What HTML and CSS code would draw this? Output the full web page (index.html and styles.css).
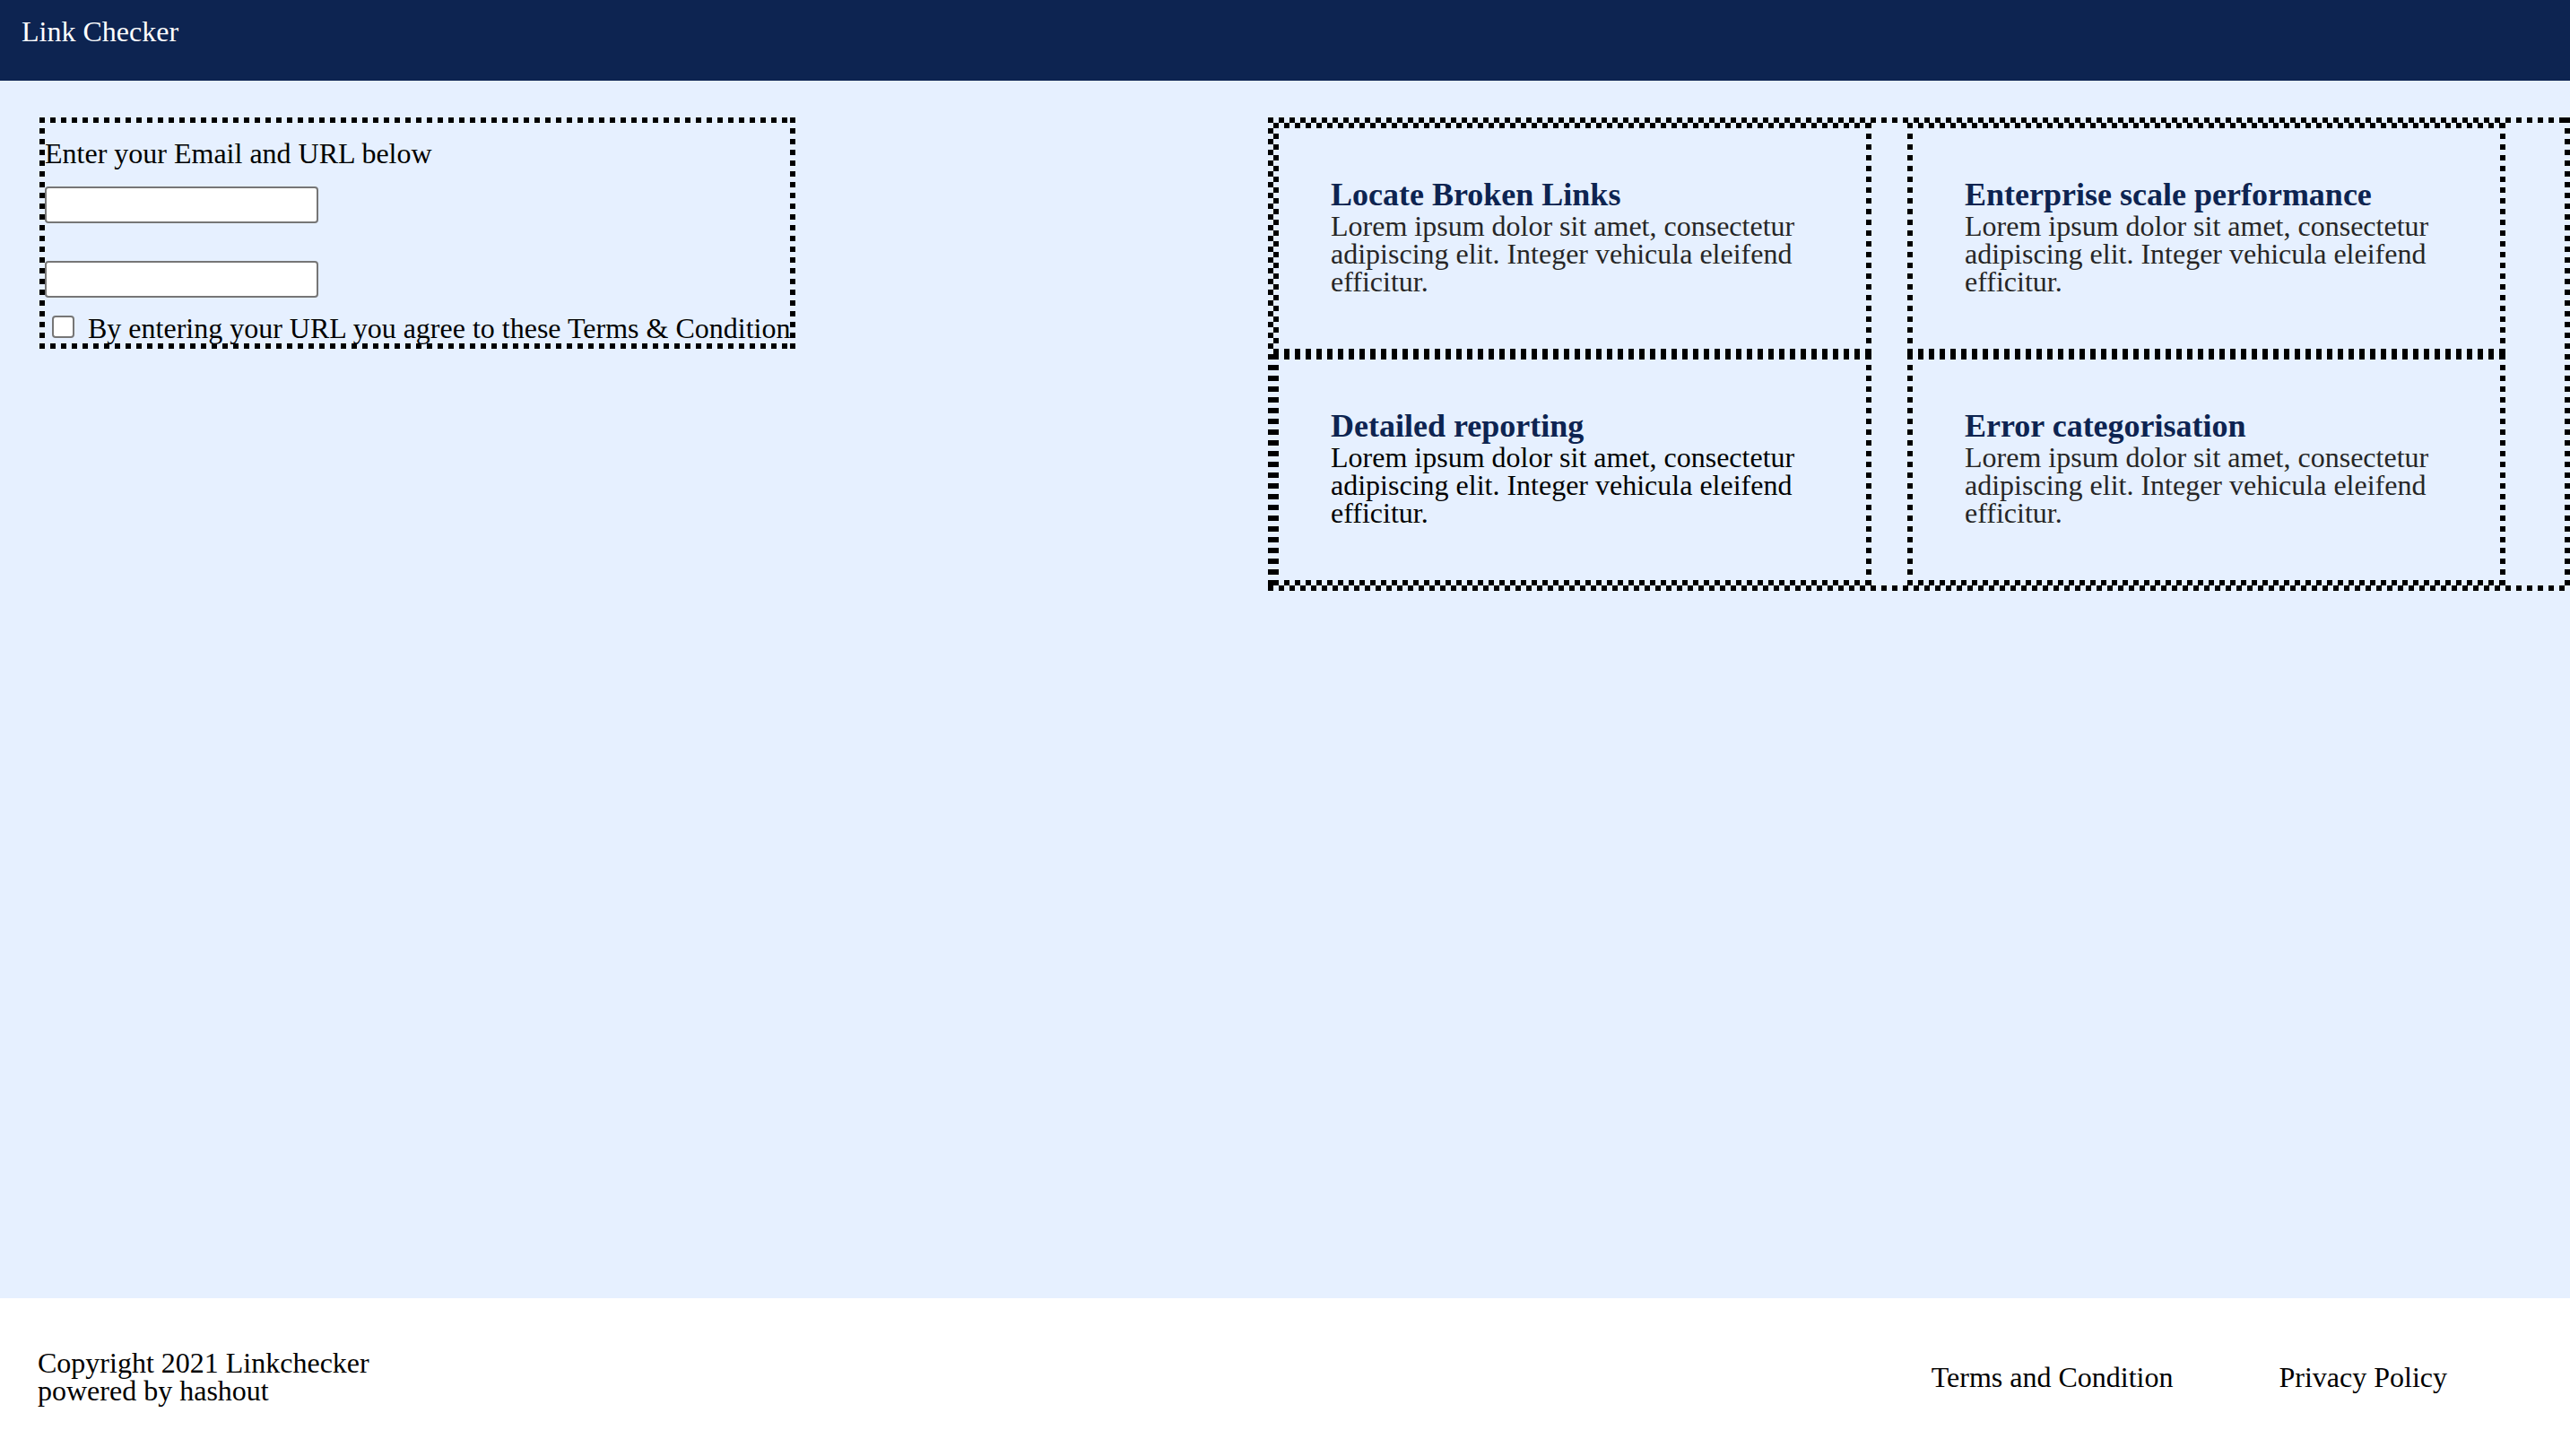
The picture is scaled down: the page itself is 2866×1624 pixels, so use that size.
FILE: index.html
```html
<!DOCTYPE html>
<html lang="en">
<head>
<meta charset="utf-8">
<title>Link Checker</title>
<link rel="stylesheet" href="styles.css">
</head>
<body>
<header class="topbar"><span class="brand">Link Checker</span></header>
<main class="main">
  <form class="signup dotbox">
    <div class="signup-title">Enter your Email and URL below</div>
    <input class="field" type="email">
    <input class="field field-second" type="text">
    <label class="agree"><input type="checkbox" class="agree-box">By entering your URL you agree to these Terms &amp; Condition</label>
  </form>
  <section class="features dotbox">
    <article class="feature dotbox">
      <h3 class="feature-title">Locate Broken Links</h3>
      <p class="feature-text">Lorem ipsum dolor sit amet, consectetur adipiscing elit. Integer vehicula eleifend efficitur.</p>
    </article>
    <article class="feature dotbox">
      <h3 class="feature-title">Enterprise scale performance</h3>
      <p class="feature-text">Lorem ipsum dolor sit amet, consectetur adipiscing elit. Integer vehicula eleifend efficitur.</p>
    </article>
    <article class="feature dotbox">
      <h3 class="feature-title">Detailed reporting</h3>
      <p class="feature-text feature-text-dark">Lorem ipsum dolor sit amet, consectetur adipiscing elit. Integer vehicula eleifend efficitur.</p>
    </article>
    <article class="feature dotbox">
      <h3 class="feature-title">Error categorisation</h3>
      <p class="feature-text">Lorem ipsum dolor sit amet, consectetur adipiscing elit. Integer vehicula eleifend efficitur.</p>
    </article>
  </section>
</main>
<footer class="footer">
  <div class="copy">
    <div>Copyright 2021 Linkchecker</div>
    <div>powered by hashout</div>
  </div>
  <nav class="footer-links">
    <a class="footer-link" href="#">Terms and Condition</a>
    <a class="footer-link" href="#">Privacy Policy</a>
  </nav>
</footer>
</body>
</html>
```
FILE: styles.css
```css
html, body {
  margin: 0;
  padding: 0;
}
body {
  font-family: "Liberation Serif", "Times New Roman", serif;
  font-size: 32px;
  color: #000;
  display: flex;
  flex-direction: column;
  height: 100vh;
  overflow: hidden;
}
.topbar {
  height: 90px;
  flex: 0 0 90px;
  box-sizing: border-box;
  background: #0d2451;
  color: #fff;
  padding: 17px 24px 0;
  line-height: 36px;
}
.main {
  flex: 1 1 auto;
  background: #e6f0ff;
  display: flex;
  justify-content: space-between;
  align-items: flex-start;
  padding: 41px 0 0 44px;
}
.dotbox {
  border: 6px solid transparent;
  background-image:
    repeating-linear-gradient(90deg, #000 0 6px, transparent 6px 12px),
    repeating-linear-gradient(90deg, #000 0 6px, transparent 6px 12px),
    repeating-linear-gradient(180deg, #000 0 6px, transparent 6px 12px),
    repeating-linear-gradient(180deg, #000 0 6px, transparent 6px 12px);
  background-size: 100% 6px, 100% 6px, 6px 100%, 6px 100%;
  background-position: left top, left bottom, left top, right top;
  background-repeat: no-repeat;
  background-origin: border-box;
  background-clip: border-box;
}
.signup {
  margin: 0;
  width: fit-content;
}
.signup-title {
  margin-top: 16px;
  line-height: 36px;
  white-space: nowrap;
}
.field {
  display: block;
  width: 305px;
  height: 41px;
  box-sizing: border-box;
  margin: 19px 0 0 0;
  padding: 0;
  border: 2px solid #767676;
  border-radius: 4px;
  background: #fff;
}
.field-second {
  margin-top: 42px;
}
.agree {
  display: block;
  margin-top: 17px;
  line-height: 34px;
  white-space: nowrap;
}
.agree-box {
  appearance: none;
  -webkit-appearance: none;
  width: 25px;
  height: 25px;
  box-sizing: border-box;
  margin: 0 15px 0 8px;
  border: 2px solid #767676;
  border-radius: 4px;
  background: #fff;
  vertical-align: baseline;
}
.features {
  width: 1452px;
  box-sizing: border-box;
  display: grid;
  grid-template-columns: 667px 667px;
  column-gap: 40px;
  align-content: start;
  flex: 0 0 auto;
}
.feature {
  height: 258px;
  box-sizing: border-box;
  padding: 54px 58px;
}
.feature-title {
  margin: 0;
  font-size: 36px;
  line-height: 40px;
  font-weight: bold;
  color: #0d2451;
}
.feature-text {
  margin: 0;
  line-height: 31px;
  color: #262626;
}
.feature-text-dark {
  color: #000;
}
.footer {
  flex: 0 0 176px;
  height: 176px;
  box-sizing: border-box;
  background: #fff;
  display: flex;
  align-items: center;
  justify-content: space-between;
  padding: 0 137px 0 42px;
  line-height: 31px;
}
.footer-links {
  display: flex;
  gap: 118px;
}
.footer-link {
  color: #000;
  text-decoration: none;
}
```
